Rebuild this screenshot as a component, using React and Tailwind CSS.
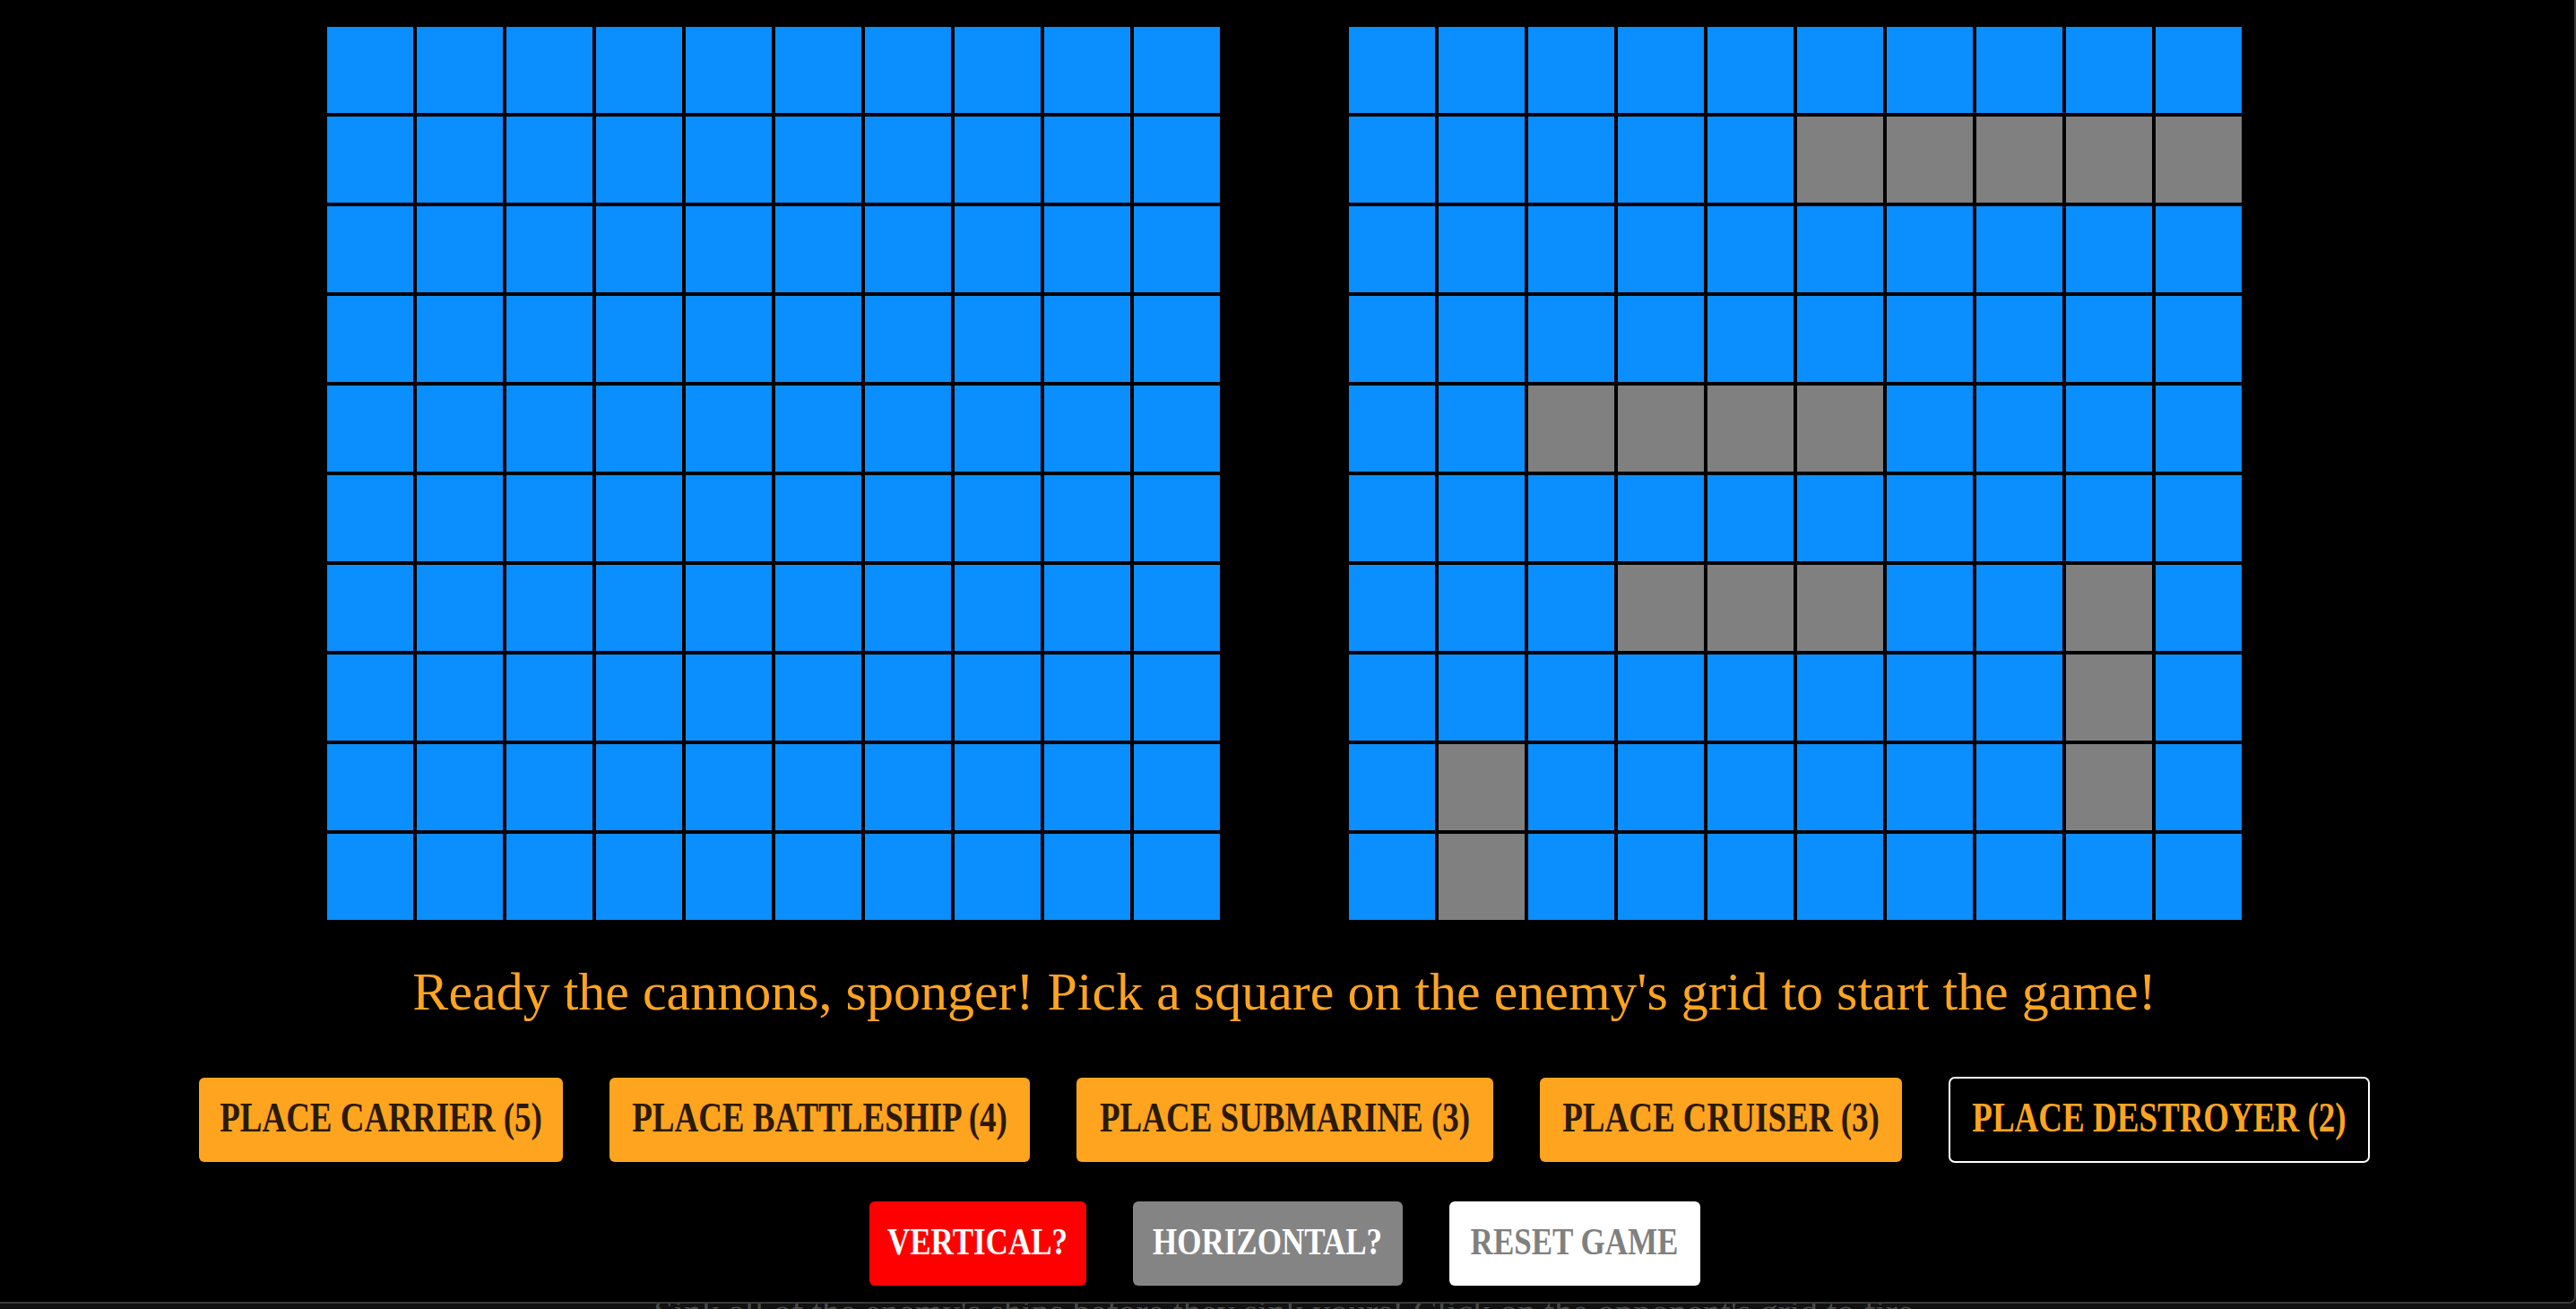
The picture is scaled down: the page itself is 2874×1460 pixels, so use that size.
import React from 'react';

const ships = [
  [1, 5], [1, 6], [1, 7], [1, 8], [1, 9],
  [4, 2], [4, 3], [4, 4], [4, 5],
  [6, 3], [6, 4], [6, 5],
  [6, 8], [7, 8], [8, 8],
  [8, 1], [9, 1],
];

const isShip = (r, c) => ships.some(([sr, sc]) => sr === r && sc === c);

function Board({ showShips }) {
  return (
    <div className="grid grid-cols-[repeat(10,100px)]">
      {Array.from({ length: 100 }, (_, i) => {
        const r = Math.floor(i / 10);
        const c = i % 10;
        const ship = showShips && isShip(r, c);
        return (
          <div
            key={i}
            className={`h-[100px] w-[100px] border-2 border-black ${ship ? 'bg-[#808080]' : 'bg-[#0b8efe]'}`}
          />
        );
      })}
    </div>
  );
}

const placeButtons = [
  ['PLACE CARRIER (5)', 'w-[406px]'],
  ['PLACE BATTLESHIP (4)', 'w-[469px]'],
  ['PLACE SUBMARINE (3)', 'w-[465px]'],
  ['PLACE CRUISER (3)', 'w-[404px]'],
];

export default function App() {
  return (
    <div className="h-[1460px] overflow-hidden bg-[#111] font-['Liberation_Serif',serif]">
      <div className="relative z-10 h-[1454px] rounded-br-[8px] border-r-2 border-b-2 border-[#3a3a3a] bg-black pr-[6px] pt-[28px]">
        <div className="flex justify-center gap-[140px]">
          <Board showShips={false} />
          <Board showShips />
        </div>

        <p className="mt-[48px] text-center text-[60px] leading-[60px] text-[#ffa41f]">
          Ready the cannons, sponger! Pick a square on the enemy's grid to start the game!
        </p>

        <div className="mt-[65px] flex items-center justify-center gap-[52px]">
          {placeButtons.map(([label, w]) => (
            <button
              key={label}
              className={`${w} h-[94px] rounded-[6px] bg-[#ffa41f] text-[37px] font-bold leading-none text-[#2b1a05]`}
            >
              <span className="inline-block -translate-y-[3px] scale-y-[1.27] whitespace-nowrap">{label}</span>
            </button>
          ))}
          <button className="h-[96px] w-[470px] rounded-[7px] border-2 border-white bg-black text-[37px] font-bold leading-none text-[#ffa41f]">
            <span className="inline-block -translate-y-[3px] scale-y-[1.27] whitespace-nowrap">PLACE DESTROYER (2)</span>
          </button>
        </div>

        <div className="mt-[43px] flex justify-center gap-[52px]">
          <button className="h-[94px] w-[242px] rounded-[6px] bg-[#ff0000] text-[35px] font-bold leading-none text-white">
            <span className="inline-block -translate-y-[2px] scale-y-[1.2] whitespace-nowrap">VERTICAL?</span>
          </button>
          <button className="h-[94px] w-[301px] rounded-[6px] bg-[#848484] text-[35px] font-bold leading-none text-white">
            <span className="inline-block -translate-y-[2px] scale-y-[1.2] whitespace-nowrap">HORIZONTAL?</span>
          </button>
          <button className="h-[94px] w-[280px] rounded-[6px] bg-white text-[35px] font-bold leading-none text-[#808080]">
            <span className="inline-block -translate-y-[2px] scale-y-[1.2] whitespace-nowrap">RESET GAME</span>
          </button>
        </div>
      </div>
      <p className="relative z-0 -mt-[10px] text-center text-[40px] leading-[40px] text-[#4a4a4a]">
        Sink all of the enemy's ships before they sink yours! Click on the opponent's grid to fire.
      </p>
    </div>
  );
}
